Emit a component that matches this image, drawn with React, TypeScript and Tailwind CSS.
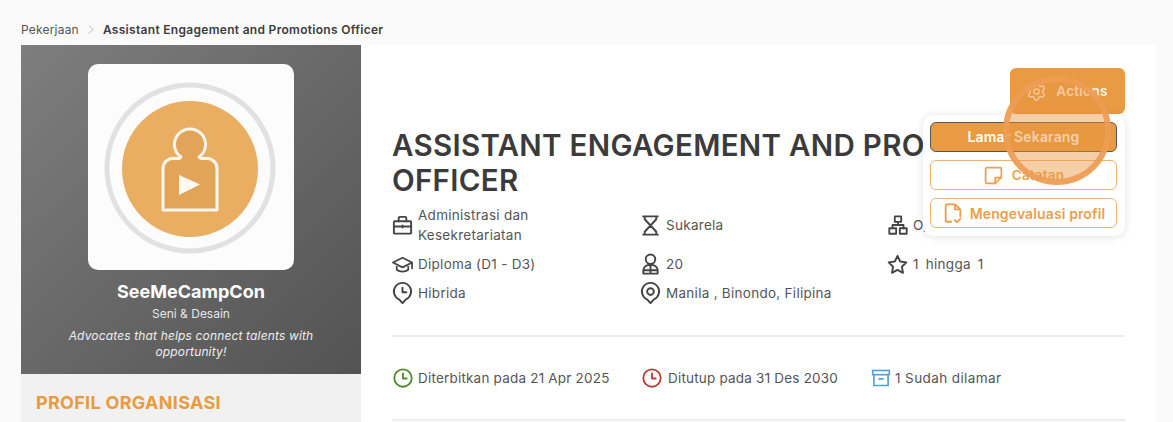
import type { ReactNode } from "react";
import { Settings } from "lucide-react";

const font = { fontFamily: '"Inter", "Noto Sans", sans-serif' };

function Icon({ className, children }: { className: string; children: ReactNode }) {
  return (
    <svg viewBox="0 0 24 24" fill="none" stroke="currentColor" strokeWidth="2" strokeLinejoin="round" strokeLinecap="round" className={className}>
      {children}
    </svg>
  );
}

function InfoItem({ icon, children }: { icon: ReactNode; children: ReactNode }) {
  return (
    <div className="flex items-center gap-[4px] text-[13.5px] leading-[20px] tracking-[0.28px] text-[#555555]">
      <span className="w-[23px] h-[24px] shrink-0 flex items-center justify-center text-[#444444]">{icon}</span>
      <div>{children}</div>
    </div>
  );
}

function Logo() {
  return (
    <div className="w-[206px] h-[206px] rounded-[10px] bg-[#fcfcfc] mx-auto">
      <svg viewBox="0 0 206 206" className="w-[206px] h-[206px]">
        <circle cx="102" cy="104" r="83" fill="none" stroke="#e1e1e1" strokeWidth="5" />
        <circle cx="102" cy="105" r="68" fill="#e9ae62" />
        <path d="M93 93a15.500 15.500 0 1 1 18 0l2 1.500h6a10 10 0 0 1 10 10V146H75V104.500a10 10 0 0 1 10-10h6z" fill="#e2a458" stroke="#fdf6ec" strokeWidth="3" strokeLinejoin="round" />
        <path d="M91 111v20l21-10.500z" fill="#fdf9f2" />
      </svg>
    </div>
  );
}

export default function App() {
  return (
    <div className="relative h-[422px] overflow-hidden bg-[#fafafa] px-[21px]" style={font}>
      {/* Breadcrumb */}
      <nav className="h-[45px] pt-[21px] flex items-start gap-[9px] text-[12px] leading-[17px]">
        <span className="tracking-[0.2px] text-[#555555]">Pekerjaan</span>
        <svg viewBox="0 0 8 12" fill="none" stroke="#aaaaaa" className="w-[6px] h-[9px] mt-[4px]">
          <path d="M1 1l6 5-6 5" />
        </svg>
        <span className="font-semibold tracking-[0.3px] text-[#3d3d3d]">Assistant Engagement and Promotions Officer</span>
      </nav>

      <main className="flex">
        {/* Left column */}
        <aside className="w-[340px] shrink-0">
          <div className="h-[329px] pt-[19px] bg-gradient-to-br from-[#7e7e7e] to-[#535353] text-center text-white">
            <Logo />
            <h2 className="mt-[11px] text-[18px] leading-[22px] font-bold">SeeMeCampCon</h2>
            <p className="mt-[2px] text-[12px] leading-[18px] text-[#e6e6e6]">Seni &amp; Desain</p>
            <p className="mt-[5px] px-[40px] text-[12px] leading-[16px] italic tracking-[0.15px] text-[#eeeeee]">
              Advocates that helps connect talents with opportunity!
            </p>
          </div>
          <div className="h-[60px] bg-[#f1f1f1] px-[15px] pt-[18px]">
            <h3 className="text-[18px] leading-[22px] font-bold tracking-[0.3px] text-[#e89b42]">PROFIL ORGANISASI</h3>
          </div>
        </aside>

        {/* Job detail */}
        <section className="relative w-[795px] shrink-0 bg-white pl-[31px] pr-[31px] pt-[23px]">
          <div className="flex justify-end">
            <button className="w-[115px] h-[46px] rounded-[6px] bg-[#e89b42] flex items-center justify-center gap-[9px] pl-[2px] text-[13.5px] font-semibold tracking-[0.25px] text-white/90">
              <Settings className="w-[21px] h-[21px] -ml-[3px]" strokeWidth={1.6} />
              Actions
            </button>
          </div>

          <h1 className="mt-[14px] text-[29.5px] leading-[35px] font-semibold tracking-[0.3px] text-[#3b3b3b] whitespace-nowrap">
            ASSISTANT ENGAGEMENT AND PROMOTIONS
            <br />
            OFFICER
          </h1>

          <div className="mt-[7px] grid grid-cols-[248px_247px_1fr] grid-rows-[40px_20px_20px] gap-y-[9px] items-center -ml-[1px]">
            <InfoItem
              icon={
                <Icon className="w-[23px] h-[23px]">
                  <rect x="3" y="7.500" width="18" height="13" rx="1" />
                  <path d="M8 7.500V4.500A1.500 1.500 0 0 1 9.500 3h5A1.500 1.500 0 0 1 16 4.500v3M3 13h18M12 12v2" />
                </Icon>
              }
            >
              Administrasi dan
              <br />
              Kesekretariatan
            </InfoItem>
            <InfoItem
              icon={
                <Icon className="w-[23px] h-[23px]">
                  <path strokeLinecap="butt" d="M3.500 2.500h17M3.500 21.500h17M6 2.500v3L12 12l6-6.500v-3M6 21.500v-3L12 12l6 6.500v3" />
                </Icon>
              }
            >
              Sukarela
            </InfoItem>
            <InfoItem
              icon={
                <Icon className="w-[22px] h-[22px]">
                  <rect x="8.500" y="2.500" width="7" height="6" />
                  <rect x="2.500" y="15.500" width="7.500" height="6" />
                  <rect x="14" y="15.500" width="7.500" height="6" />
                  <path d="M12 8.500V12M6 15.500V12h12v3.500" />
                </Icon>
              }
            >
              O,
            </InfoItem>

            <InfoItem
              icon={
                <Icon className="w-[25px] h-[25px]">
                  <path strokeWidth="1.800" d="M12 5L2 10l10 5 10-5zM6 12v5.500c3 2.500 9 2.500 12 0V12M22 10v6" />
                </Icon>
              }
            >
              Diploma (D1 - D3)
            </InfoItem>
            <InfoItem
              icon={
                <Icon className="w-[24px] h-[24px]">
                  <circle cx="12" cy="7" r="5" />
                  <path d="M4.500 22v-3a6 6 0 0 1 6-6h3a6 6 0 0 1 6 6v3zM12 14v8M4.500 18.500h15" />
                </Icon>
              }
            >
              20
            </InfoItem>
            <InfoItem
              icon={
                <Icon className="w-[25px] h-[25px]">
                  <path d="M12 3l2.800 5.900 6.400.9-4.600 4.500 1.100 6.400L12 17.700l-5.700 3 1.100-6.400-4.600-4.500 6.400-.9z" />
                </Icon>
              }
            >
              <span>1</span>
              <span className="ml-[7px]">hingga</span>
              <span className="ml-[7px]">1</span>
            </InfoItem>

            <InfoItem
              icon={
                <Icon className="w-[24px] h-[24px]">
                  <path d="M12 22.500l-3.300-3.700a9 9 0 1 1 6.600 0z" />
                  <path d="M12 6.500v4.700h4" />
                </Icon>
              }
            >
              Hibrida
            </InfoItem>
            <InfoItem
              icon={
                <Icon className="w-[24px] h-[24px]">
                  <path d="M12 22.500l-3.300-3.700a9 9 0 1 1 6.600 0z" />
                  <circle cx="12" cy="10.500" r="3.500" />
                </Icon>
              }
            >
              Manila , Binondo, Filipina
            </InfoItem>
          </div>

          <hr className="mt-[32px] border-t-2 border-[#ececec]" />

          <div className="h-[82px] flex items-center text-[13.5px] tracking-[0.2px] text-[#555555]">
            <span className="w-[22px] h-[22px] mr-[4px] text-[#4f8a2a]">
              <Icon className="w-[22px] h-[22px]">
                <circle cx="12" cy="12" r="9.500" />
                <path d="M12 7v5.500h4" />
              </Icon>
            </span>
            <span className="w-[223px]">Diterbitkan pada 21 Apr 2025</span>
            <span className="w-[22px] h-[22px] mr-[5px] text-[#b5403a]">
              <Icon className="w-[22px] h-[22px]">
                <circle cx="12" cy="12" r="9.500" />
                <path d="M12 7v5.500h4" />
              </Icon>
            </span>
            <span className="w-[203px]">Ditutup pada 31 Des 2030</span>
            <span className="w-[20px] h-[20px] mr-[4px] text-[#4fa3dc]">
              <Icon className="w-[20px] h-[20px]">
                <rect x="2" y="3" width="20" height="5" strokeLinejoin="miter" />
                <path strokeLinejoin="miter" d="M3.500 8v13h17V8M9.500 13h5" />
              </Icon>
            </span>
            <span className="tracking-[0.4px]">1 Sudah dilamar</span>
          </div>

          <hr className="border-t-2 border-[#ececec]" />

          {/* Actions menu */}
          <div className="absolute left-[562px] top-[70px] w-[202px] h-[121px] rounded-[10px] bg-white shadow-[0_1px_8px_rgba(0,0,0,0.12)] pl-[7px] pr-[8px] py-[7px] flex flex-col gap-[8px]">
            <button className="h-[30px] pb-[1px] rounded-[6px] border border-[#555555] bg-[#e89b42] text-[14px] font-semibold tracking-[0.15px] text-white">
              Lamar Sekarang
            </button>
            <button className="h-[30px] rounded-[6px] border border-[#eeb273] flex items-center justify-center gap-[8px] text-[13.5px] font-semibold tracking-[0.2px] text-[#ea9f4d]">
              <Icon className="w-[21px] h-[21px]">
                <path d="M4.500 3h15A1.500 1.500 0 0 1 21 4.500V14l-7 7H4.500A1.500 1.500 0 0 1 3 19.500v-15A1.500 1.500 0 0 1 4.500 3z" />
                <path d="M20.500 14.500H14V21" />
              </Icon>
              Catatan
            </button>
            <button className="h-[30px] rounded-[6px] border border-[#eeb273] flex items-center justify-center gap-[6px] text-[14px] font-semibold tracking-[0.12px] text-[#ea9f4d]">
              <Icon className="w-[22px] h-[24px]">
                <path d="M10 21.500H5a1 1 0 0 1-1-1v-17a1 1 0 0 1 1-1h9l6 5.500v8M14 3v5h6M14 20l2.500 2 3.500-3.500" />
              </Icon>
              Mengevaluasi profil
            </button>
          </div>

          {/* Click ripple */}
          <div className="absolute left-[642px] top-[31px] w-[108px] h-[109px] rounded-full border-[6px] border-[#ec9d55]/90 bg-[#e8953f]/45 pointer-events-none" />
        </section>
      </main>
    </div>
  );
}
